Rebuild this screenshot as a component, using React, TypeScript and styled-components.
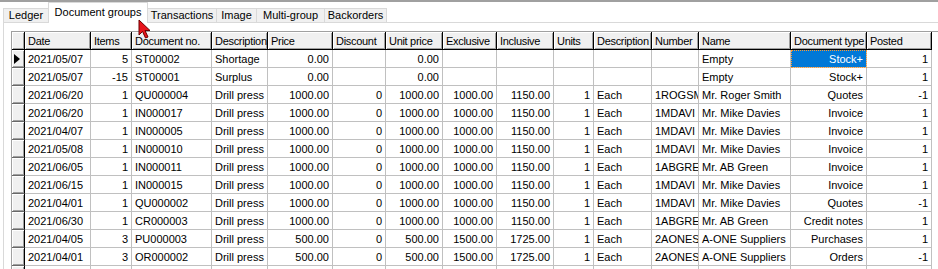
import React from 'react';
import styled, { createGlobalStyle } from 'styled-components';

const GlobalStyle = createGlobalStyle`
  html, body {
    margin: 0;
    padding: 0;
    background: #ffffff;
    overflow: hidden;
  }
  body {
    font-family: "Liberation Sans", Arial, sans-serif;
    font-size: 11px;
    color: #000000;
  }
`;

const Window = styled.div`
  position: relative;
  width: 938px;
  height: 269px;
  overflow: hidden;
  background: #ffffff;
`;

const TopEdge = styled.div`
  height: 2px;
  background: #a0a0a0;
`;

const TabStrip = styled.div`
  display: flex;
  align-items: flex-end;
  height: 20px;
  padding-left: 3px;
`;

const Tab = styled.div<{ $active?: boolean; $w: number }>`
  box-sizing: border-box;
  width: ${p => p.$w}px;
  height: ${p => (p.$active ? 21 : 14)}px;
  margin-right: -1px;
  margin-bottom: ${p => (p.$active ? -1 : 0)}px;
  position: relative;
  z-index: ${p => (p.$active ? 2 : 1)};
  display: flex;
  align-items: ${p => (p.$active ? 'flex-start' : 'center')};
  justify-content: center;
  padding-top: ${p => (p.$active ? 3 : 0)}px;
  background: ${p => (p.$active ? '#ffffff' : '#f0f0f0')};
  border: 1px solid #d9d9d9;
  border-bottom: none;
  line-height: 13px;
  white-space: nowrap;
`;

const TabSheet = styled.div`
  border-top: 1px solid #d9d9d9;
  border-left: 1px solid #d9d9d9;
  margin-left: 3px;
  padding: 8px 0 0 7px;
`;

const GridFrame = styled.div`
  border-top: 1px solid #a0a0a0;
  border-left: 1px solid #a0a0a0;
  background: #ffffff;
`;

const COLS = '13px 66px 41px 80px 56px 65px 53px 57px 54px 57px 40px 58px 47px 92px 76px 65px';

const Row = styled.div`
  display: grid;
  grid-template-columns: ${COLS};
  height: 18px;
`;

const HeadCell = styled.div`
  box-sizing: border-box;
  height: 18px;
  background: #f0f0f0;
  border-right: 1px solid #000000;
  border-bottom: 1px solid #000000;
  box-shadow: inset 1px 1px 0 #ffffff, inset -1px -1px 0 #a0a0a0;
  padding: 1px 2px 0 3px;
  line-height: 16px;
  letter-spacing: -0.3px;
  white-space: nowrap;
  overflow: hidden;
`;

const Indicator = styled.div`
  box-sizing: border-box;
  height: 18px;
  background: #f0f0f0;
  border-right: 1px solid #000000;
  border-bottom: 1px solid #696969;
  box-shadow: inset 1px 1px 0 #ffffff, inset -1px -1px 0 #a0a0a0;
  display: flex;
  align-items: center;
  padding: 1px 0 0 2px;
`;

const Cell = styled.div<{ $right?: boolean; $selected?: boolean }>`
  box-sizing: border-box;
  height: 18px;
  border-right: 1px solid #c0c0c0;
  border-bottom: 1px solid #c0c0c0;
  padding: 2px 3px 0;
  line-height: 15px;
  text-align: ${p => (p.$right ? 'right' : 'left')};
  white-space: nowrap;
  overflow: hidden;
  background: ${p => (p.$selected ? '#0078d7' : '#ffffff')};
  color: ${p => (p.$selected ? '#ffffff' : '#000000')};
  outline: ${p => (p.$selected ? '1px dotted #ff9a2e' : 'none')};
  outline-offset: -1px;
`;

const Cursor = styled.svg`
  position: absolute;
  left: 138px;
  top: 19px;
  z-index: 10;
`;

const headers = [
  'Date', 'Items', 'Document no.', 'Description', 'Price', 'Discount', 'Unit price',
  'Exclusive', 'Inclusive', 'Units', 'Description', 'Number', 'Name', 'Document type', 'Posted',
];

const rightCols = [false, true, false, false, true, true, true, true, true, true, false, false, false, true, true];

const line = (date: string, items: string, doc: string, num: string, name: string, type: string, posted: string, big = true) => [
  date, items, doc, 'Drill press',
  big ? '1000.00' : '500.00', '0', big ? '1000.00' : '500.00',
  big ? '1000.00' : '1500.00', big ? '1150.00' : '1725.00', '1', 'Each',
  num, name, type, posted,
];

const rows: string[][] = [
  ['2021/05/07', '5', 'ST00002', 'Shortage', '0.00', '', '0.00', '', '', '', '', '', 'Empty', 'Stock+', '1'],
  ['2021/05/07', '-15', 'ST00001', 'Surplus', '0.00', '', '0.00', '', '', '', '', '', 'Empty', 'Stock+', '1'],
  line('2021/06/20', '1', 'QU000004', '1ROGSMI', 'Mr. Roger Smith', 'Quotes', '-1'),
  line('2021/06/20', '1', 'IN000017', '1MDAVI', 'Mr. Mike Davies', 'Invoice', '1'),
  line('2021/04/07', '1', 'IN000005', '1MDAVI', 'Mr. Mike Davies', 'Invoice', '1'),
  line('2021/05/08', '1', 'IN000010', '1MDAVI', 'Mr. Mike Davies', 'Invoice', '1'),
  line('2021/06/05', '1', 'IN000011', '1ABGRE', 'Mr. AB Green', 'Invoice', '1'),
  line('2021/06/15', '1', 'IN000015', '1MDAVI', 'Mr. Mike Davies', 'Invoice', '1'),
  line('2021/04/01', '1', 'QU000002', '1MDAVI', 'Mr. Mike Davies', 'Quotes', '-1'),
  line('2021/06/30', '1', 'CR000003', '1ABGRE', 'Mr. AB Green', 'Credit notes', '1'),
  line('2021/04/05', '3', 'PU000003', '2AONES', 'A-ONE Suppliers', 'Purchases', '1', false),
  line('2021/04/01', '3', 'OR000002', '2AONES', 'A-ONE Suppliers', 'Orders', '-1', false),
  headers.map(() => ''),
];

const tabs = [
  { label: 'Ledger', w: 46 },
  { label: 'Document groups', w: 100, active: true },
  { label: 'Transactions', w: 70 },
  { label: 'Image', w: 41 },
  { label: 'Multi-group', w: 69 },
  { label: 'Backorders', w: 63 },
];

export default function App() {
  return (
    <Window>
      <GlobalStyle />
      <TopEdge />
      <TabStrip>
        {tabs.map(t => (
          <Tab key={t.label} $w={t.w} $active={t.active}>
            {t.label}
          </Tab>
        ))}
      </TabStrip>
      <TabSheet>
        <GridFrame>
          <Row>
            <HeadCell />
            {headers.map((h, i) => (
              <HeadCell key={i}>{h}</HeadCell>
            ))}
          </Row>
          {rows.map((r, ri) => (
            <Row key={ri}>
              <Indicator>
                {ri === 0 && (
                  <svg width="6" height="10" viewBox="0 0 6 10">
                    <path d="M0 0 L6 5 L0 10 Z" fill="#000" />
                  </svg>
                )}
              </Indicator>
              {r.map((v, ci) => (
                <Cell key={ci} $right={rightCols[ci]} $selected={ri === 0 && ci === 13}>
                  {v}
                </Cell>
              ))}
            </Row>
          ))}
        </GridFrame>
      </TabSheet>
      <Cursor width="14" height="20" viewBox="0 0 14 20">
        <path d="M1 1 L1 16 L4.5 12.5 L7.5 19 L10 18 L7 11.5 L12 11.5 Z" fill="#e8141c" stroke="#6a0000" strokeWidth="1" strokeLinejoin="round" />
      </Cursor>
    </Window>
  );
}
